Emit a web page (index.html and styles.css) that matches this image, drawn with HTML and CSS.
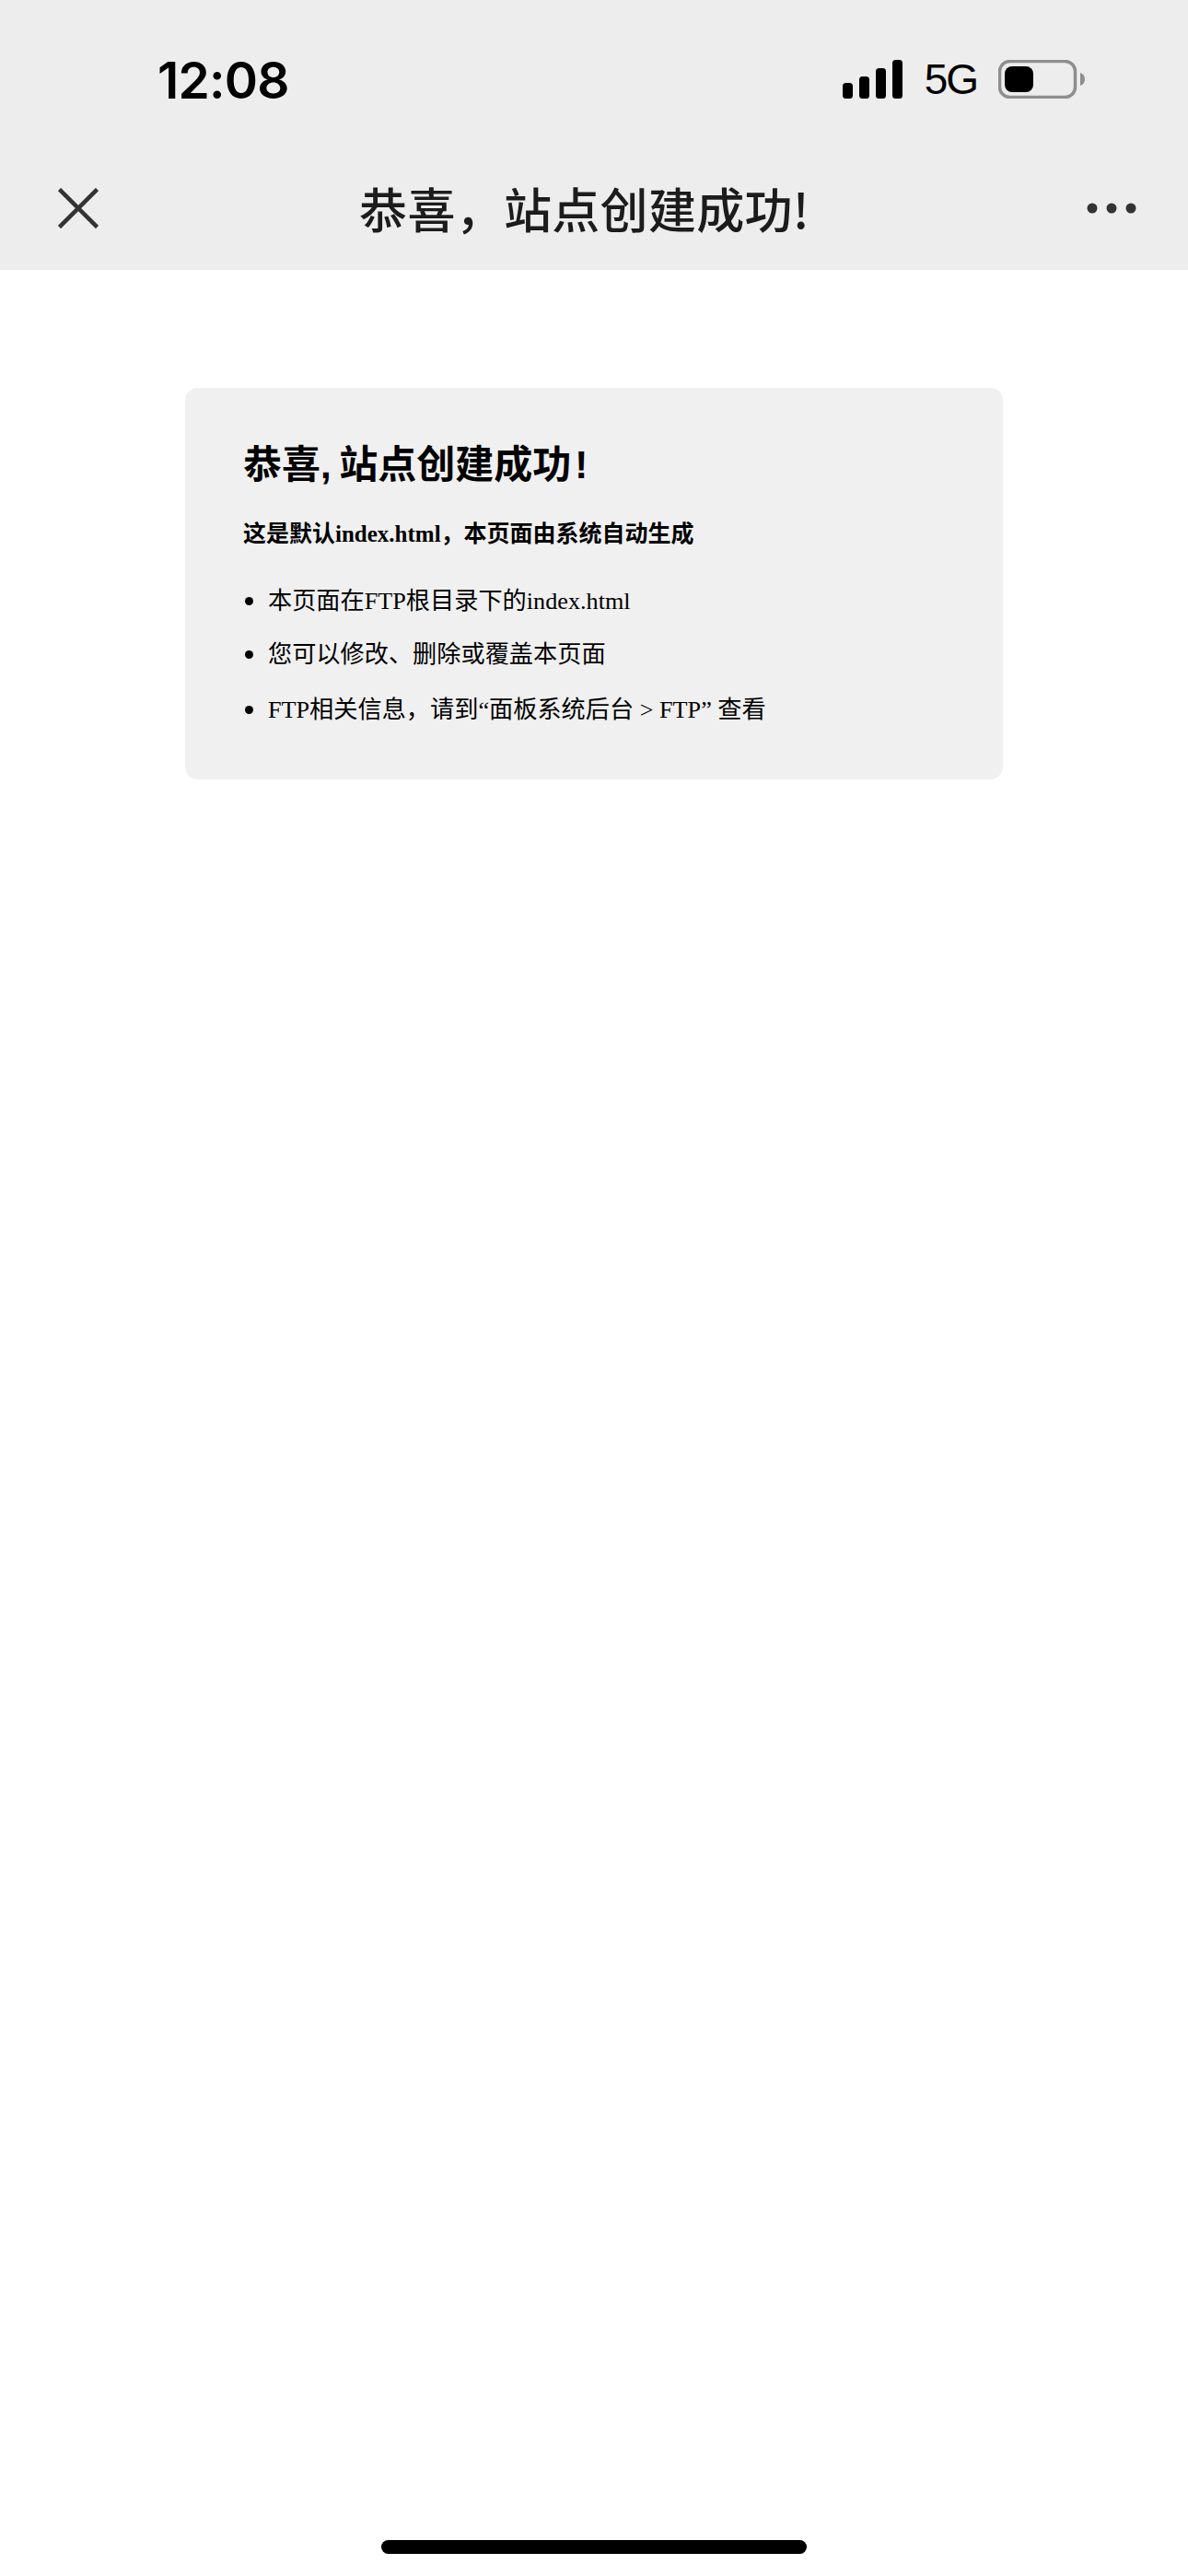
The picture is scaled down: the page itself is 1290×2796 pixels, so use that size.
FILE: index.html
```html
<!DOCTYPE html>
<html lang="zh-CN">
<head>
<meta charset="utf-8">
<title>恭喜，站点创建成功！</title>
<link rel="stylesheet" href="styles.css">
</head>
<body>
<header class="top">
  <div class="status">
    <span class="time">12:08</span>
    <div class="indicators">
      <svg class="signal" viewBox="0 0 66 42" width="66" height="42" aria-hidden="true">
        <rect x="0" y="25" width="11" height="17" rx="3.5"/>
        <rect x="18" y="18" width="11" height="24" rx="3.5"/>
        <rect x="36" y="9" width="11" height="33" rx="3.5"/>
        <rect x="54" y="0" width="11" height="42" rx="3.5"/>
      </svg>
      <span class="network">5G</span>
      <svg class="battery" viewBox="0 0 94 42" width="94" height="42" aria-hidden="true">
        <rect x="1.5" y="1.5" width="82" height="39" rx="11" class="battery-shell"/>
        <rect x="7" y="7" width="31" height="28" rx="8"/>
        <path d="M89 14c3 1 5 3.500 5 7s-2 6-5 7z" class="battery-nub"/>
      </svg>
    </div>
  </div>
  <nav class="nav">
    <svg class="close" viewBox="0 0 44 44" width="44" height="44" aria-hidden="true">
      <path d="M1.500 1.500 42.500 42.500M42.500 1.500 1.500 42.500"/>
    </svg>
    <span class="nav-title">恭喜，站点创建成功!</span>
    <svg class="more" viewBox="0 0 54 12" width="54" height="12" aria-hidden="true">
      <circle cx="6" cy="6" r="5.500"/>
      <circle cx="27" cy="6" r="5.500"/>
      <circle cx="48" cy="6" r="5.500"/>
    </svg>
  </nav>
</header>
<main class="content">
  <section class="card">
    <h1 class="card-title">恭喜, 站点创建成功<span class="bang">!</span></h1>
    <h3 class="card-sub">这是默认index.html，本页面由系统自动生成</h3>
    <ul class="card-list">
      <li>本页面在FTP根目录下的index.html</li>
      <li>您可以修改、删除或覆盖本页面</li>
      <li>FTP相关信息，请到“面板系统后台 &gt; FTP” 查看</li>
    </ul>
  </section>
</main>
<div class="home-bar"></div>
</body>
</html>
```
FILE: styles.css
```css
* { box-sizing: border-box; }
html, body { margin: 0; padding: 0; }
body {
  width: 1290px;
  height: 2796px;
  background: #fff;
  display: flex;
  flex-direction: column;
  overflow: hidden;
}
.top { height: 293px; background: #ededed; flex: none; }
.status {
  height: 172px;
  display: flex;
  align-items: center;
  justify-content: space-between;
  padding: 0 112px 0 171px;
}
.time {
  font: 600 55px/1 Inter, "Liberation Sans", sans-serif;
  color: #000;
  letter-spacing: -0.8px;
  padding-top: 2px;
}
.indicators { display: flex; align-items: center; gap: 23px; }
.signal { fill: #000; }
.network {
  font: 400 46px/1 "Liberation Sans", sans-serif;
  color: #000;
  letter-spacing: -2px;
}
.battery { fill: #000; }
.battery-shell { fill: none; stroke: #8e8e8e; stroke-width: 3.500; }
.battery-nub { fill: #8e8e8e; }
.nav {
  height: 112px;
  display: flex;
  align-items: center;
  justify-content: space-between;
  padding: 0 56px 4px 63px;
}
.close { fill: none; stroke: #333; stroke-width: 4.500; }
.more { fill: #333; }
.nav-title {
  font: 500 52px/1 "Noto Sans CJK SC", "Liberation Sans", sans-serif;
  color: #1c1c1c;
  letter-spacing: 0.3px;
  margin-right: 18px;
}
.content { padding: 128px 201px 0 201px; flex: 1; }
.card {
  height: 425px;
  background: #f0f0f0;
  border-radius: 14px;
  padding: 52px 64px 0 63px;
  color: #000;
}
.card-title {
  margin: 0;
  font: 700 42px/64px "Liberation Sans", "Noto Sans CJK SC", sans-serif;
  word-spacing: -3px;
}
.bang { margin-left: 4px; }
.card-sub {
  margin: 25px 0 0;
  font: 700 25px/36px "Liberation Serif", "Noto Sans CJK SC", serif;
}
.card-list {
  margin: 35px 0 0;
  padding: 0 0 0 27px;
  font: 400 26.2px/36px "Liberation Serif", "Noto Sans CJK SC", serif;
}
.card-list li + li { margin-top: 20px; }
.card-list li:last-child { margin-top: 22px; }
.card-list li::marker { font-size: 31px; }
.home-bar {
  flex: none;
  width: 462px;
  height: 15px;
  margin: 0 auto 24px;
  background: #000;
  border-radius: 8px;
}
```
